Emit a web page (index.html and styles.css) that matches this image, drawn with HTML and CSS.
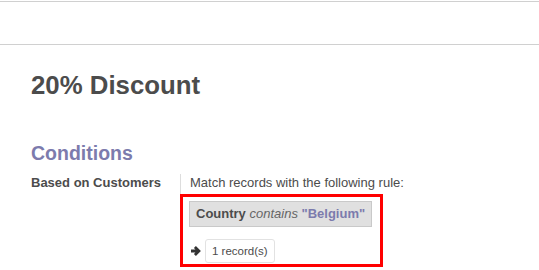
FILE: index.html
```html
<!DOCTYPE html>
<html lang="en">
<head>
    <meta charset="UTF-8">
    <meta name="viewport" content="width=device-width, initial-scale=1.0">
    <title>20% Discount</title>
    <link rel="stylesheet" href="styles.css">
</head>
<body>
    <div class="topbar"></div>

    <div class="sheet">
        <h1 class="title">20% Discount</h1>
        <h2 class="group-title">Conditions</h2>

        <div class="field-row">
            <div class="field-label">Based on Customers</div>
            <div class="field-value">
                <div class="rule-text">Match records with the following rule:</div>
                <div class="highlight">
                    <div class="domain-chip">
                        <b>Country</b> <i class="op">contains</i> <b class="val">"Belgium"</b>
                    </div>
                    <div class="records">
                        <svg class="arrow" width="11" height="12" viewBox="0 0 11 12">
                            <path d="M1 6H8.6M4.9 2L8.9 6L4.9 10" fill="none" stroke="#333" stroke-width="2.8" stroke-linecap="butt"/>
                        </svg>
                        <button class="record-btn">1 record(s)</button>
                    </div>
                </div>
            </div>
        </div>
    </div>
</body>
</html>
```

FILE: styles.css
```css
body {
    font-family: "Liberation Sans", Arial, sans-serif;
    font-size: 13px;
    color: #4c4c4c;
    background-color: #fff;
    margin: 0;
}
.topbar {
    margin-top: 1px;
    height: 42px;
    border-top: 1px solid #d0d0d0;
    border-bottom: 1px solid #d0d0d0;
}
.sheet {
    padding: 0 31px;
}
.title {
    font-size: 25.8px;
    font-weight: bold;
    line-height: 31px;
    margin: 25px 0 0;
}
.group-title {
    font-size: 19.5px;
    font-weight: bold;
    line-height: 24px;
    color: #7c7bad;
    margin: 40px 0 0;
}
.field-row {
    display: flex;
    margin-top: 9px;
}
.field-label {
    width: 149px;
    font-weight: bold;
    line-height: 18px;
}
.field-value {
    border-left: 1px solid #ddd;
    padding-left: 9px;
    line-height: 18px;
}
.highlight {
    width: 203px;
    box-sizing: border-box;
    margin: 2px 0 0 -10px;
    border: 3px solid #ff0000;
    padding: 4px 6px 1px;
}
.domain-chip {
    display: inline-block;
    padding: 3px 6px;
    background-color: #e0e0e0;
    border: 1px solid #c9c9c9;
    white-space: nowrap;
}
.op {
    color: #666;
}
.val {
    color: #7c7bad;
}
.records {
    display: flex;
    align-items: center;
    gap: 4px;
    margin-top: 12px;
    padding-left: 1px;
}
.record-btn {
    font-family: inherit;
    font-size: 11.5px;
    color: #4c4c4c;
    height: 24px;
    padding: 0 6px;
    background-color: #fff;
    border: 1px solid #e2e2e2;
    border-radius: 3px;
}
```
